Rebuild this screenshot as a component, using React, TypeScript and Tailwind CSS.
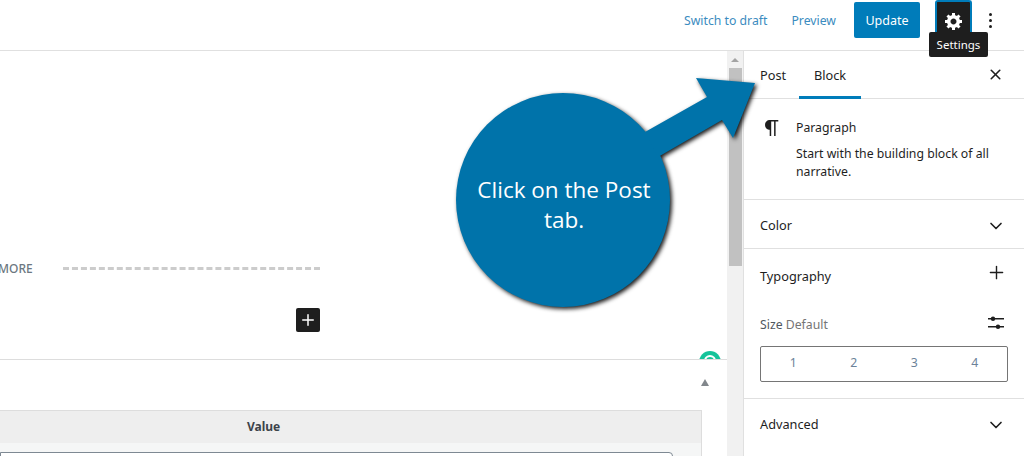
import React from 'react';
import { ChevronDown, Plus, X } from 'lucide-react';

const GEAR = 'M18 12h-2.18c-.17.7-.44 1.35-.81 1.93l1.54 1.54-2.1 2.1-1.54-1.54c-.58.36-1.23.63-1.91.79V19H8v-2.18c-.68-.16-1.33-.43-1.91-.79l-1.54 1.54-2.12-2.12 1.54-1.54c-.36-.58-.63-1.23-.79-1.91H1V9.03h2.17c.16-.7.44-1.35.8-1.94L2.43 5.55l2.1-2.1 1.54 1.54c.58-.37 1.24-.64 1.93-.81V2h3v2.18c.68.16 1.33.43 1.91.79l1.54-1.54 2.12 2.12-1.54 1.54c.36.59.64 1.24.8 1.94H18V12zm-8.5 1.5c1.66 0 3-1.34 3-3s-1.34-3-3-3-3 1.34-3 3 1.34 3 3 3z';
const PILCROW = 'M18.3 4H9.9v-.1l-.9.2c-2.3.4-4 2.4-4 4.8s1.7 4.4 4 4.8l.7.1V20h1.5V5.5h2.9V20h1.5V5.5h2.7V4z';

const Header = () => (
  <div className="h-[51px] shrink-0 border-b border-[#e0e0e0] flex items-start bg-white text-[12.25px]">
    <div className="ml-auto h-[40px] flex items-center text-[#3b8cc0]">
      <span className="pt-[3px]">Switch to draft</span>
      <span className="ml-[24px] pt-[3px]">Preview</span>
      <div className="ml-[18px] w-[66px] h-[36px] rounded-[2px] bg-[#007cba] text-white text-[12.5px] pt-[3px] flex items-center justify-center">Update</div>
    </div>
    <div className="relative ml-[15px] w-[37px] h-[33px] bg-[#1e1e1e] border-2 border-b-0 border-[#007cba] rounded-t-[3px] flex items-center justify-center">
      <svg width="20" height="20" viewBox="0 0 20 20" className="fill-white mt-[7px]"><path d={GEAR} /></svg>
      <div className="absolute z-20 left-[-8px] top-[30px] w-[59px] h-[25px] bg-[#1e1e1e] rounded-[2px] text-white text-[11.5px] flex items-center justify-center">Settings</div>
    </div>
    <div className="ml-[17px] mr-[32px] mt-[13px] flex flex-col gap-[3px]">
      <span className="w-[3px] h-[3px] rounded-full bg-[#1e1e1e]" />
      <span className="w-[3px] h-[3px] rounded-full bg-[#1e1e1e]" />
      <span className="w-[3px] h-[3px] rounded-full bg-[#1e1e1e]" />
    </div>
  </div>
);

const Editor = () => (
  <div className="w-[727px] shrink-0 flex flex-col bg-white">
    <div className="relative h-[309px] shrink-0 border-b border-[#dddddd] overflow-hidden">
      <div className="mt-[208px] h-[18px] flex items-center">
        <span className="-ml-[2px] w-[65px] shrink-0 pt-[2px] text-[12px] font-medium text-[#6c7781]">MORE</span>
        <div className="w-[257px] border-t-[3px] border-dashed border-[#cccccc]" />
      </div>
      <div className="ml-[296px] mt-[31px] w-[24px] h-[24px] rounded-[2px] bg-[#1e1e1e] flex items-center justify-center">
        <Plus size={18} strokeWidth={2} className="text-white" />
      </div>
      <div className="absolute left-[699px] top-[300px] w-[22px] h-[22px] rounded-full bg-[#15c39a] flex items-start justify-center pt-[4px]">
        <div className="w-[12px] h-[12px] rounded-full border-2 border-white" />
      </div>
    </div>
    <div className="flex-1 min-h-0 flex flex-col relative">
      <div className="absolute right-[18px] top-[19px] w-0 h-0 border-x-[4px] border-x-transparent border-b-[7px] border-b-[#82878c]" />
      <div className="mt-[50px] w-[702px] h-full border-t border-r border-[#dddddd] flex flex-col">
        <div className="h-[32px] shrink-0 bg-[#eeeeee] flex items-center text-[12px] font-bold text-[#3c434a]">
          <span className="ml-[247px]">Value</span>
        </div>
        <div className="flex-1 bg-[#f5f6f6] pt-[9px] pr-[28px]">
          <div className="h-[20px] bg-white border border-[#7e8993] rounded-tr-[4px]" />
        </div>
      </div>
    </div>
  </div>
);

const Scrollbar = () => (
  <div className="w-[16px] shrink-0 bg-[#f1f1f1] flex flex-col items-center">
    <div className="mt-[7px] w-0 h-0 border-x-[4px] border-x-transparent border-b-[4px] border-b-[#a3a3a3]" />
    <div className="mt-[6px] w-[13px] h-[198px] bg-[#c1c1c1]" />
  </div>
);

const PanelRow = ({ label, children }: { label: string; children: React.ReactNode }) => (
  <div className="flex items-center justify-between pl-[16px] pr-[16px]">
    <span className="text-[12.75px] text-[#1e1e1e]">{label}</span>
    <span className="w-[24px] flex items-center justify-center">{children}</span>
  </div>
);

const Sidebar = () => (
  <div className="flex-1 min-w-0 border-l border-[#e0e0e0] bg-white flex flex-col text-[#1e1e1e]">
    <div className="h-[48px] shrink-0 border-b border-[#e0e0e0] flex items-stretch pl-[16px] pr-[20px] text-[12.75px]">
      <span className="flex items-center pt-[2px] w-[25px]">Post</span>
      <span className="ml-[14px] w-[62px] flex items-center justify-center border-b-[3px] border-[#007cba] -mb-px pt-[5px]">Block</span>
      <X size={17} strokeWidth={2.25} className="ml-auto self-center" />
    </div>
    <div className="h-[101px] shrink-0 border-b border-[#e0e0e0] pl-[16px] pr-[16px] flex">
      <svg width="24" height="24" viewBox="0 0 24 24" className="shrink-0 mt-[17px] mr-[12px] fill-[#1e1e1e]"><path d={PILCROW} /></svg>
      <div className="mt-[19px]">
        <div className="text-[12.25px] leading-[20px]">Paragraph</div>
        <div className="mt-[7px] leading-[18px] text-[12.25px]">Start with the building block of all narrative.</div>
      </div>
    </div>
    <div className="h-[49px] shrink-0 border-b border-[#e0e0e0] flex flex-col justify-center pt-[3px]">
      <PanelRow label="Color"><ChevronDown size={20} strokeWidth={2} /></PanelRow>
    </div>
    <div className="h-[150px] shrink-0 border-b border-[#e0e0e0] flex flex-col">
      <div className="mt-[18px]">
        <PanelRow label="Typography"><Plus size={21} strokeWidth={1.6} className="-mt-[8px]" /></PanelRow>
      </div>
      <div className="mt-[30px] flex items-center justify-between pl-[16px] pr-[19px] text-[12.25px]">
        <span className="text-[#50575e]">Size <span className="text-[#757575]">Default</span></span>
        <svg width="18" height="18" viewBox="0 0 18 18" className="fill-[#1e1e1e] -mt-[4px]">
          <rect x="1" y="4" width="16" height="1.5" />
          <circle cx="6" cy="4.7" r="2.2" />
          <rect x="1" y="12" width="16" height="1.5" />
          <circle cx="11" cy="12.7" r="2.2" />
        </svg>
      </div>
      <div className="mt-[11px] mx-[16px] h-[36px] border border-[#757575] rounded-[2px] grid grid-cols-4 text-[12.25px] text-[#6b8299] px-[2px]">
        {['1', '2', '3', '4'].map(n => (
          <span key={n} className="flex items-center justify-center">{n}</span>
        ))}
      </div>
    </div>
    <div className="h-[52px] shrink-0 flex flex-col justify-center">
      <PanelRow label="Advanced"><ChevronDown size={20} strokeWidth={2} /></PanelRow>
    </div>
  </div>
);

const Callout = () => (
  <div className="absolute left-[450px] top-[70px] w-[320px] h-[250px] z-10">
    <svg width="320" height="250" viewBox="450 70 320 250" className="fill-[#0073aa] drop-shadow-[2px_2px_2px_rgba(0,0,0,0.9)]">
      <circle cx="563" cy="200" r="107" />
      <path d="M645 132 L707 97 L696 78 L755 83 L733 138 L722 120 L658 157 Z" />
    </svg>
    <div className="absolute left-[24px] top-[105px] w-[180px] text-center text-white text-[22.5px] leading-[30px] font-['Open_Sans',sans-serif]">
      Click on the Post tab.
    </div>
  </div>
);

export default function App() {
  return (
    <div className="relative w-[1024px] h-[456px] overflow-hidden bg-white flex flex-col font-['Noto_Sans',sans-serif]">
      <Header />
      <div className="flex-1 min-h-0 flex">
        <Editor />
        <Scrollbar />
        <Sidebar />
      </div>
      <Callout />
    </div>
  );
}
